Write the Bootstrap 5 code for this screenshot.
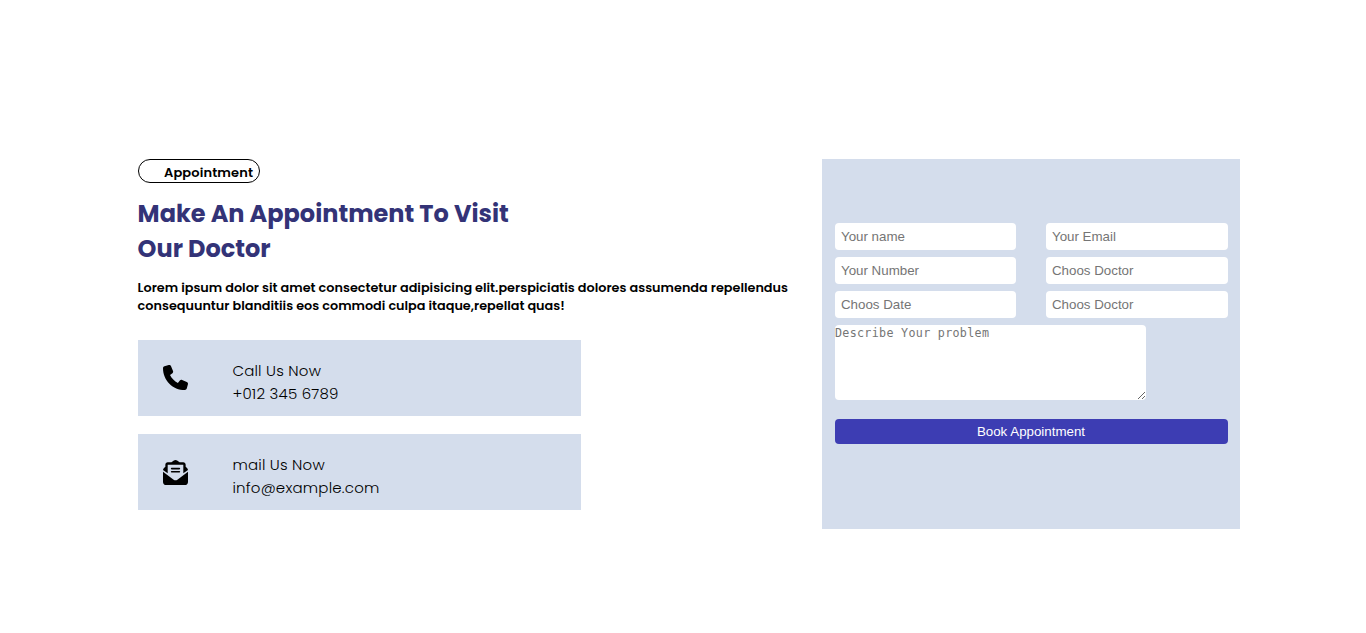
<!DOCTYPE html>
<html lang="en">
<head>
<meta charset="utf-8">
<meta name="viewport" content="width=device-width, initial-scale=1">
<title>Appointment</title>
<link href="https://cdn.jsdelivr.net/npm/bootstrap@5.3.0/dist/css/bootstrap.min.css" rel="stylesheet">
<style>
body{font-family:Poppins,Inter,sans-serif;color:#000;background:#fff}
.appointment{width:1102.4px;margin-left:137.6px;padding-top:159px}
.tag{width:122px;height:24px;border:1px solid #000;border-radius:12px;padding:2px 0 0 25.4px;font-size:13px;line-height:21px;font-weight:600;letter-spacing:.12px;white-space:nowrap}
.headline{color:#333377;font-size:24px;line-height:35px;font-weight:700;margin:13px 0 0;white-space:nowrap}
.intro{font-size:12.8px;line-height:18px;font-weight:600;margin:13px 0 0;white-space:nowrap}
.panel{background:#d4ddec}
.contacts{margin-top:25px;gap:18px}
.contact{width:443px;height:76px;padding:0 0 0 25px}
.contact svg{width:25px;height:25px;margin-top:25px}
.contact + .contact svg{margin-top:26px}
.contact-text{margin-left:44.8px;padding-top:19px;font-size:15px;line-height:23px;font-weight:300;letter-spacing:.2px}
.booking{width:418px;height:370px;padding:64px 12px 0 13px}
.fields{display:grid;grid-template-columns:181px 182px;column-gap:30px;row-gap:7px}
.booking input,.booking textarea{border:0;border-radius:4px;background:#fff;color:#000;outline:0}
.booking input{height:27px;width:100%;padding:0 6px;font:13.333px "Liberation Sans",Arial,sans-serif}
.booking ::placeholder{color:#757575;opacity:1}
.booking textarea{width:311px;height:75px;margin-top:7px;padding:1px 0 0;font:11.7px/14px "DejaVu Sans Mono",monospace;letter-spacing:.31px}
.book-btn{height:25px;margin-top:19px;border:0;border-radius:4px;background:#3d3db3;color:#fff;font:13.333px/25px "Liberation Sans",Arial,sans-serif;padding:0 1px 0 0}
</style>
</head>
<body>
<main class="appointment d-flex justify-content-between">
  <section>
    <div class="tag">Appointment</div>
    <h1 class="headline">Make An Appointment To Visit<br>Our Doctor</h1>
    <p class="intro">Lorem ipsum dolor sit amet consectetur adipisicing elit.perspiciatis dolores assumenda repellendus<br>consequuntur blanditiis eos commodi culpa itaque,repellat quas!</p>
    <div class="contacts d-flex flex-column">
      <div class="contact panel d-flex align-items-start">
        <svg viewBox="0 0 512 512" aria-hidden="true"><path d="M164.9 24.6c-7.7-18.6-28-28.5-47.4-23.2l-88 24C12.1 30.2 0 46 0 64C0 311.4 200.6 512 448 512c18 0 33.8-12.1 38.6-29.5l24-88c5.3-19.4-4.6-39.7-23.2-47.4l-96-40c-16.3-6.8-35.2-2.1-46.3 11.6L304.7 368C234.3 334.7 177.3 277.7 144 207.3L193.3 167c13.7-11.2 18.4-30 11.6-46.3l-40-96z"/></svg>
        <div class="contact-text">Call Us Now<br>+012 345 6789</div>
      </div>
      <div class="contact panel d-flex align-items-start">
        <svg viewBox="0 0 512 512" aria-hidden="true"><path d="M215.4 96H144 107.8 96v8.8V144v40.4 89L.2 202.5c1.6-18.1 10.9-34.9 25.7-45.8L48 140.3V96c0-26.5 21.5-48 48-48h76.6l49.9-36.9C232.2 3.9 243.9 0 256 0s23.8 3.9 33.5 11L339.4 48H416c26.5 0 48 21.5 48 48v44.3l22.1 16.4c14.8 10.9 24.1 27.7 25.7 45.8L416 273.4v-89V144 104.8 96H404.2 368 296.6 215.4zM0 448V242.1L217.6 403.3c11.1 8.2 24.6 12.7 38.4 12.7s27.3-4.4 38.4-12.7L512 242.1V448c0 35.3-28.7 64-64 64H64c-35.3 0-64-28.7-64-64zM176 160H336c8.800 0 16 7.200 16 16s-7.200 16-16 16H176c-8.800 0-16-7.200-16-16s7.200-16 16-16zm0 64H336c8.800 0 16 7.200 16 16s-7.200 16-16 16H176c-8.800 0-16-7.200-16-16s7.200-16 16-16z"/></svg>
        <div class="contact-text">mail Us Now<br>info@example.com</div>
      </div>
    </div>
  </section>
  <form class="booking panel d-flex flex-column">
    <div class="fields">
      <input type="text" placeholder="Your name">
      <input type="text" placeholder="Your Email">
      <input type="text" placeholder="Your Number">
      <input type="text" placeholder="Choos Doctor">
      <input type="text" placeholder="Choos Date">
      <input type="text" placeholder="Choos Doctor">
    </div>
    <textarea placeholder="Describe Your problem"></textarea>
    <button type="button" class="book-btn w-100">Book Appointment</button>
  </form>
</main>
<script src="https://cdn.jsdelivr.net/npm/bootstrap@5.3.0/dist/js/bootstrap.bundle.min.js"></script>
</body>
</html>
